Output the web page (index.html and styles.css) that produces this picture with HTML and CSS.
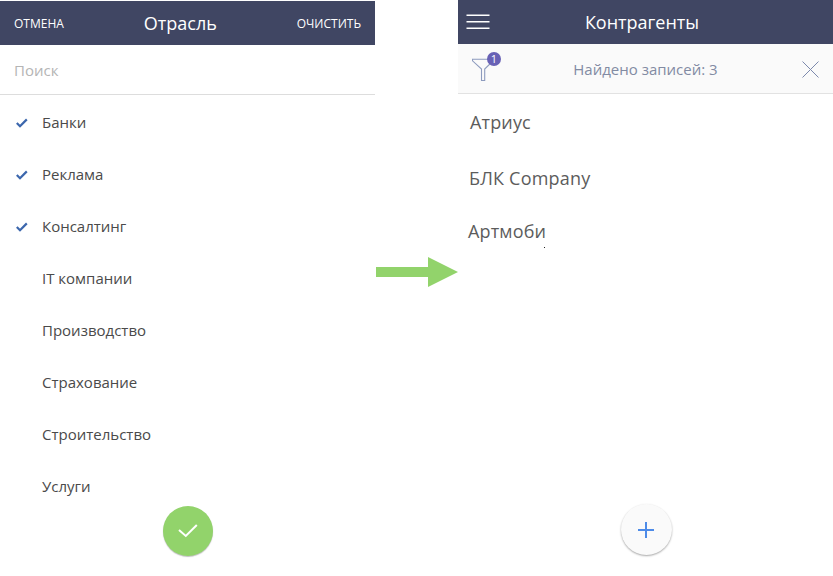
FILE: index.html
```html
<!DOCTYPE html>
<html lang="ru">
<head>
<meta charset="utf-8">
<title>Отрасль — Контрагенты</title>
<link rel="stylesheet" href="styles.css">
</head>
<body>
<main class="board">
  <section class="screen lookup">
    <header class="bar">
      <span class="action cancel">ОТМЕНА</span>
      <h1 class="title">Отрасль</h1>
      <span class="action clear">ОЧИСТИТЬ</span>
    </header>
    <div class="search"><span>Поиск</span></div>
    <ul class="options">
      <li><svg class="tick" viewBox="0 0 12 10"><path d="M.8 5 4 8.2 10.8 1.4"/></svg><span>Банки</span></li>
      <li><svg class="tick" viewBox="0 0 12 10"><path d="M.8 5 4 8.2 10.8 1.4"/></svg><span>Реклама</span></li>
      <li><svg class="tick" viewBox="0 0 12 10"><path d="M.8 5 4 8.2 10.8 1.4"/></svg><span>Консалтинг</span></li>
      <li><span>IT компании</span></li>
      <li><span>Производство</span></li>
      <li><span>Страхование</span></li>
      <li><span>Строительство</span></li>
      <li><span>Услуги</span></li>
    </ul>
    <div class="fab confirm"><svg width="20" height="14" viewBox="0 0 20 14"><path d="M1 6 7.8 12 18.8 1"/></svg></div>
  </section>
  <div class="flow">
    <svg width="82" height="30" viewBox="0 0 82 30"><path d="M0 10H52V0L82 15 52 30V20H0Z"/></svg>
  </div>
  <section class="screen accounts">
    <header class="bar">
      <svg class="menu" width="24" height="16" viewBox="0 0 24 16"><path d="M.5 1.3H23.5M.5 7.8H23.5M.5 14.3H23.5"/></svg>
      <h1 class="title">Контрагенты</h1>
      <span></span>
    </header>
    <div class="filter">
      <div class="funnel">
        <svg width="24" height="24" viewBox="0 0 24 24"><path d="M.5 2.2H21.5V3.5L12.7 12V23.5H9.5V12L.5 3.8Z"/></svg>
        <span class="badge">1</span>
      </div>
      <span class="found">Найдено записей: 3</span>
      <svg class="close" width="17" height="17" viewBox="0 0 17 17"><path d="M.5.5 16.5 16.5M16.5.5.5 16.5"/></svg>
    </div>
    <ul class="records">
      <li class="r1"><span>Атриус</span></li>
      <li class="r2"><span>БЛК Company</span></li>
      <li class="r3"><span>Артмоби</span><i class="dot"></i></li>
    </ul>
    <div class="fab add"><svg width="16" height="16" viewBox="0 0 16 16"><path d="M8 0V16M0 8H16"/></svg></div>
  </section>
</main>
</body>
</html>
```
FILE: styles.css
```css
* { box-sizing: border-box; }
body { margin: 0; background: #fff; font-family: "Open Sans", sans-serif; color: #4a4a4a; }
.board { display: grid; grid-template-columns: 375px 83px 375px; height: 576px; overflow: hidden; }
.screen { display: flex; flex-direction: column; height: 576px; }
.lookup { padding-top: 1px; }
svg { display: block; flex: none; fill: none; }
ul { list-style: none; margin: 0; padding: 0; }
.bar { display: grid; grid-template-columns: 1fr auto 1fr; align-items: center; height: 44px; flex: none; padding: 0 14px; background: #404663; color: #fff; white-space: nowrap; }
.title { margin: 0; font-size: 18px; font-weight: 400; line-height: 24px; }
.lookup .bar { grid-template-columns: auto 1fr auto; text-align: center; }
.action { font-size: 12px; }
.search { display: flex; align-items: center; height: 50px; padding: 1px 14px 0; border-bottom: 1px solid #ddd; color: #b5b5b5; font-size: 15px; }
.options { padding-top: 1px; }
.options li { display: flex; align-items: center; height: 52px; padding-left: 42px; font-size: 15px; }
.tick { width: 12px; height: 10px; margin: 1px 14px 0 -26px; stroke: #3c67ad; stroke-width: 2.2; }
.fab { display: flex; align-items: center; justify-content: center; width: 50px; height: 50px; flex: none; border-radius: 50%; box-shadow: 0 1px 1px rgba(0,0,0,.25); }
.confirm { margin: -6px 0 0 163px; background: #92d36b; }
.confirm svg { stroke: #fff; stroke-width: 2; }
.flow { padding: 257px 0 0 1px; }
.flow svg { fill: #92d36b; }
.accounts .bar { padding: 0 8px; }
.accounts .title { margin-left: -7px; }
.menu { stroke: #fff; stroke-width: 1.6; }
.filter { display: grid; grid-template-columns: 24px 1fr 17px; align-items: center; height: 50px; flex: none; padding: 0 14px; background: #fafafa; border-bottom: 1px solid #e2e2e2; color: #828ba3; }
.funnel { position: relative; width: 24px; height: 24px; }
.funnel svg { stroke: #8d9bbe; stroke-width: 1.1; }
.badge { position: absolute; left: 15px; top: -5px; width: 14px; height: 14px; border-radius: 50%; background: #6861b5; color: #fff; font-size: 11px; line-height: 14px; text-align: center; }
.found { padding-right: 7px; font-size: 15px; text-align: center; }
.close { margin-top: 1px; stroke: #7c89ac; stroke-width: 1; }
.records { flex: 1; font-size: 18px; color: #5c5c5c; }
.records li { display: flex; align-items: center; }
.r1 { height: 56px; padding-left: 12px; letter-spacing: .15px; }
.r2 { height: 55px; padding-left: 11px; letter-spacing: .2px; }
.r3 { height: 51px; padding-left: 10px; letter-spacing: .15px; }
.dot { width: 1px; height: 1px; margin: 33px 0 0 -2px; background: #222; }
.add { width: 51px; height: 51px; margin: 0 0 21px 162.5px; background: #fafafa; box-shadow: 0 1px 2px rgba(0,0,0,.35); }
.add svg { stroke: #4d8be8; stroke-width: 2; }
```
